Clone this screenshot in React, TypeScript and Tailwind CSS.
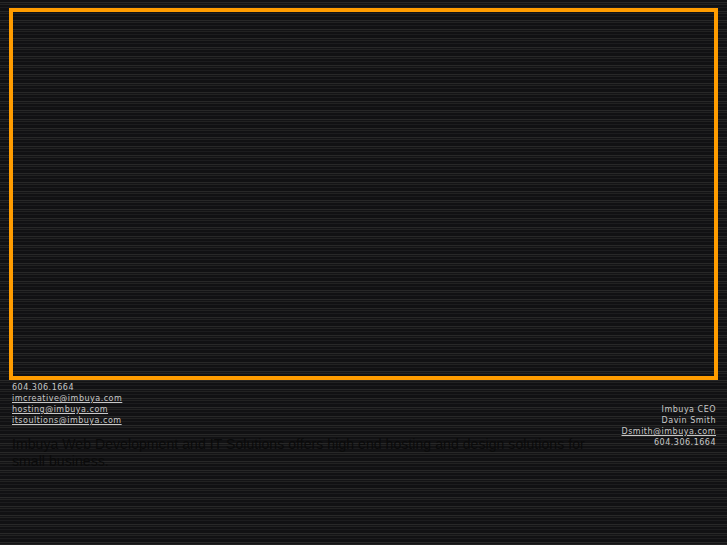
export default function App() {
  return (
    <div className="h-[545px] w-[727px] overflow-hidden bg-[#131315] bg-[repeating-linear-gradient(to_bottom,#111113_0px,#111113_2px,#282828_2px,#282828_3px,#141416_3px,#141416_4px,#222222_4px,#222222_5px,#111113_5px,#111113_7px,#1c1c1e_7px,#1c1c1e_8px,#111113_8px,#111113_9px)] font-['DejaVu_Sans',sans-serif] pt-[8px] pl-[9px]">
      <div className="h-[372px] w-[709px] border-4 border-[#ff9c00]" />
      <div className="flex w-[707px] justify-between pl-[3px]">
        <div className="w-[590px]">
          <div className="pt-[2px] text-[8px] leading-[11px] tracking-[0.5px] text-[#c8c8c8]">
            <div>604.306.1664</div>
            <div><a className="underline">imcreative@imbuya.com</a></div>
            <div><a className="underline">hosting@imbuya.com</a></div>
            <div><a className="underline">itsoultions@imbuya.com</a></div>
          </div>
          <p className="mt-[10px] font-['Liberation_Sans',sans-serif] text-[14px] leading-[17px] tracking-[0.07px] text-[#0a0a0a]">
            Imbuya Web Development and IT Solutions offers high end hosting and design solutions for small business.
          </p>
        </div>
        <div className="pt-[24px] text-right text-[8px] leading-[11px] tracking-[0.5px] text-[#c8c8c8]">
          <div>Imbuya CEO</div>
          <div>Davin Smith</div>
          <div><a className="underline">Dsmith@imbuya.com</a></div>
          <div>604.306.1664</div>
        </div>
      </div>
    </div>
  );
}
